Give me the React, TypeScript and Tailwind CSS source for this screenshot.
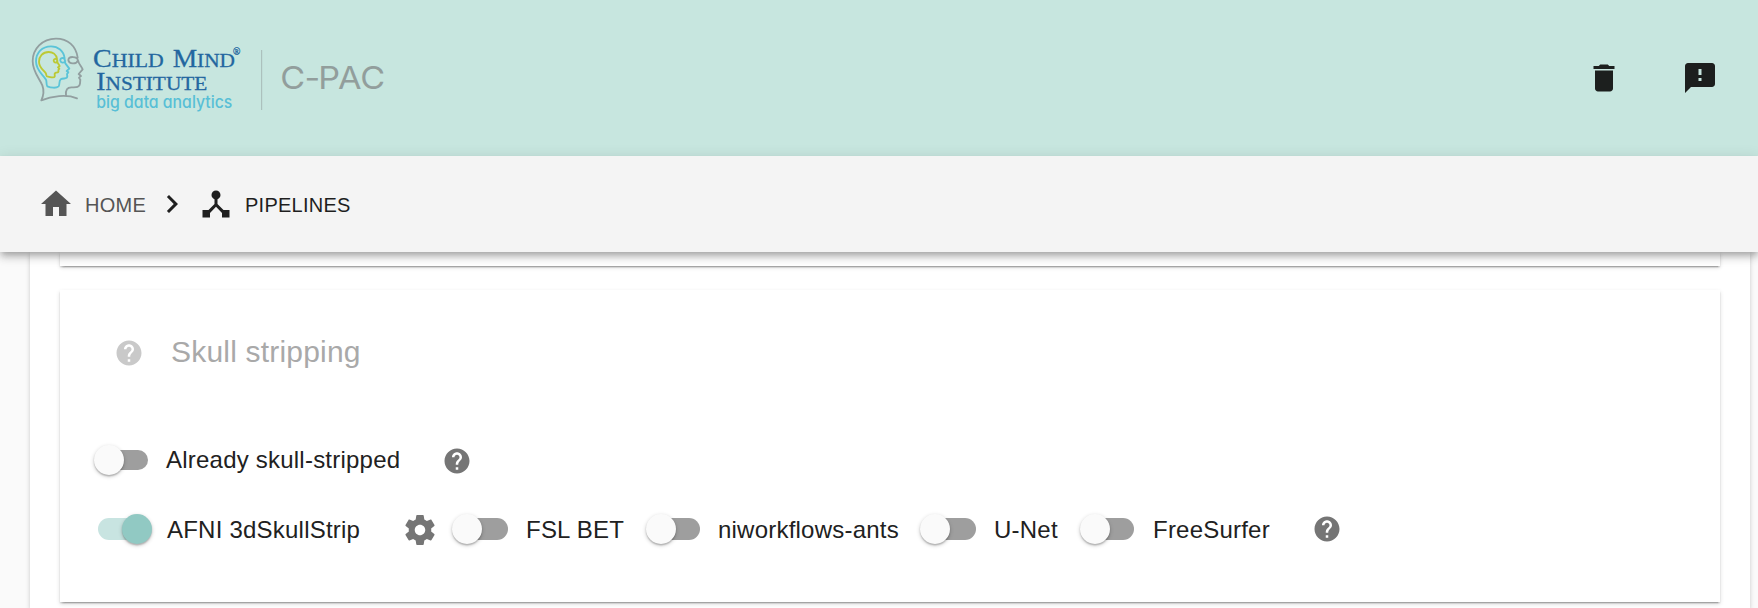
import React from "react";

const paths = {
  home: "M10 20v-6h4v6h5v-8h3L12 3 2 12h3v8z",
  chevron: "M10 6L8.59 7.41 13.17 12l-4.58 4.59L10 18l6-6z",
  hub: "M17 16l-4-4V8.82C14.16 8.4 15 7.3 15 6c0-1.66-1.34-3-3-3S9 4.34 9 6c0 1.3.84 2.4 2 2.82V12l-4 4H3v5h5v-3.05l4-4.2 4 4.2V21h5v-5h-4z",
  trash: "M6 19c0 1.1.9 2 2 2h8c1.1 0 2-.9 2-2V7H6v12zM19 4h-3.5l-1-1h-5l-1 1H5v2h14V4z",
  feedback: "M20 2H4c-1.1 0-1.99.9-1.99 2L2 22l4-4h14c1.1 0 2-.9 2-2V4c0-1.100-.9-2-2-2zm-7 12h-2v-2h2v2zm0-4h-2V6h2v4z",
  help: "M12 2C6.48 2 2 6.480 2 12s4.480 10 10 10 10-4.480 10-10S17.520 2 12 2zm1 17h-2v-2h2v2zm2.070-7.750l-.9.920C13.450 12.900 13 13.500 13 15h-2v-.5c0-1.100.450-2.100 1.170-2.830l1.240-1.260c.370-.360.590-.860.590-1.410 0-1.100-.9-2-2-2s-2 .9-2 2H8c0-2.210 1.790-4 4-4s4 1.790 4 4c0 .880-.360 1.680-.930 2.250z",
  gear: "M19.43 12.98c.04-.32.07-.64.07-.98s-.03-.66-.07-.98l2.110-1.650c.190-.150.240-.420.120-.640l-2-3.460c-.120-.220-.390-.300-.610-.220l-2.490 1c-.520-.400-1.080-.730-1.690-.980l-.380-2.650C14.460 2.180 14.250 2 14 2h-4c-.250 0-.460.180-.490.420l-.380 2.650c-.610.250-1.170.590-1.690.980l-2.490-1c-.230-.090-.490 0-.610.220l-2 3.460c-.130.220-.070.490.120.640l2.110 1.650c-.040.320-.070.650-.070.980s.030.660.070.980l-2.110 1.650c-.190.150-.240.420-.120.640l2 3.460c.120.220.390.300.610.220l2.490-1c.520.400 1.080.730 1.690.980l.380 2.650c.030.240.240.420.490.420h4c.250 0 .460-.180.490-.420l.380-2.650c.610-.250 1.170-.590 1.690-.980l2.490 1c.230.090.490 0 .610-.220l2-3.460c.120-.220.070-.490-.120-.640l-2.110-1.650zM12 15.500c-1.930 0-3.500-1.570-3.500-3.500s1.570-3.500 3.500-3.500 3.500 1.570 3.500 3.500-1.570 3.500-3.500 3.500z",
};

function Icon({ name, className = "" }: { name: keyof typeof paths; className?: string }) {
  return (
    <svg viewBox="0 0 24 24" fill="currentColor" className={`shrink-0 ${className}`}>
      <path d={paths[name]} />
    </svg>
  );
}

function Logo() {
  return (
    <svg width="370" height="100" viewBox="0 0 1110 300" className="mt-[25px] ml-5 shrink-0 self-start">
      <g fill="none" strokeLinecap="round" strokeLinejoin="round" strokeWidth="5.500">
        <path
          stroke="#929fa0"
          d="M173 98C168 62 143 41 108 41C66 41 38 73 38 108C38 140 56 156 67 181C73 197 70 213 64 226C94 213 140 207 171 220M138 212C136 194 142 187 154 187C166 187 179 189 180 176L181 164L177 158L183 153L176 147L188 133C184 124 176 117 174 106C172 94 146 92 145 105C147 118 169 119 174 106"
        />
        <path
          stroke="#5bc4d8"
          d="M134 100C131 77 114 64 93 64C66 64 48 84 48 109C48 137 68 147 78 164C81 171 78 180 82 184C93 189 109 190 116 184C120 178 116 169 122 163C130 158 142 164 142 154L141 147L145 142L140 138L148 131L136 115C134 111 136 108 134 103C129 96 120 99 121 107C124 116 134 113 136 108"
        />
        <path
          stroke="#bcc934"
          d="M111 102C109 88 98 81 86 81C68 81 57 94 57 110C57 128 70 134 77 144C81 152 77 154 84 155C92 156 102 160 104 155C106 150 100 145 108 143C114 142 117 142 115 135L118 131L114 127L119 123L112 112C114 101 101 98 101 107C103 115 111 114 112 108"
        />
      </g>
      <g fill="#23669f" stroke="#23669f" strokeWidth="0.9" fontFamily="'Liberation Serif', serif">
        <text x="219" y="125" textLength="212" lengthAdjust="spacingAndGlyphs" fontSize="76">
          C<tspan fontSize="59">HILD</tspan>
        </text>
        <text x="458" y="125" textLength="187" lengthAdjust="spacingAndGlyphs" fontSize="76">
          M<tspan fontSize="59">IND</tspan>
        </text>
        <text x="229" y="194" textLength="333" lengthAdjust="spacingAndGlyphs" fontSize="76">
          I<tspan fontSize="59">NSTITUTE</tspan>
        </text>
        <text x="639" y="91" fontSize="29">®</text>
      </g>
      <text
        x="229"
        y="250"
        textLength="408"
        lengthAdjust="spacingAndGlyphs"
        fontSize="50"
        fill="#58bfd6"
        className="font-[Inter] font-medium [font-feature-settings:'cv11']"
      >
        big data analytics
      </text>
      <path d="M725 75V255" stroke="#a8bbb7" strokeWidth="3" />
      <text
        x="710 776 813.5 867 928"
        y="192"
        transform="scale(1.1 1)"
        fontSize="93"
        fill="#929e9c"
        className="font-[Inter] font-normal"
      >
        C-PAC
      </text>
    </svg>
  );
}

type ToggleProps = {
  on?: boolean;
  label: string;
  className?: string;
  track?: string;
  text?: string;
};

function Toggle({ on = false, label, className = "", track = "h-[22px] w-[51px]", text = "ml-[18px] pt-0.5" }: ToggleProps) {
  return (
    <label className={`flex h-[60px] items-center ${className}`}>
      <span
        className={`flex shrink-0 items-center rounded-full ${track} ${
          on ? "justify-end bg-[#c8e4e1]" : "justify-start bg-[#9e9e9e]"
        }`}
      >
        <span
          className={`size-[30px] shrink-0 rounded-full shadow-[0_1.500px_4px_rgba(0,0,0,0.2),0_1.500px_1.500px_rgba(0,0,0,0.200)] ${
            on ? "-mr-[3px] bg-[#91c9c3]" : "-ml-[3px] bg-[#fafafa]"
          }`}
        />
      </span>
      <span className={`whitespace-nowrap text-2xl tracking-[0.22px] text-[#212121] ${text}`}>{label}</span>
    </label>
  );
}

const cardShadow =
  "shadow-[0_1.500px_4.500px_rgba(0,0,0,0.14),0_1.500px_1.500px_rgba(0,0,0,0.14),0_3px_1.500px_-1.500px_rgba(0,0,0,0.16)]";

export default function App() {
  return (
    <div className="flex h-[608px] w-[1758px] flex-col overflow-hidden bg-[#fafafa] font-['Liberation_Sans',Arial,sans-serif]">
      <header className="flex h-[156px] shrink-0 items-center justify-between bg-[#c7e6df] pr-10">
        <Logo />
        <div className="flex gap-[60px] text-[#1c1f1e]">
          <Icon name="trash" className="size-9" />
          <Icon name="feedback" className="size-9" />
        </div>
      </header>
      <nav className="relative z-10 flex h-24 shrink-0 items-center bg-[#f4f4f4] pl-[38px] text-xl tracking-[0.25px] text-[#1f1f1f] shadow-[0_3px_6px_-1.500px_rgba(0,0,0,0.2),0_6px_7.500px_rgba(0,0,0,0.14),0_1.500px_15px_rgba(0,0,0,0.12)]">
        <Icon name="home" className="size-9 text-[#555]" />
        <span className="ml-[11px] w-[69px] pt-0.5 text-[#555]">HOME</span>
        <Icon name="chevron" className="size-9" />
        <Icon name="hub" className="ml-2 size-9" />
        <span className="ml-[11px] pt-0.5">PIPELINES</span>
      </nav>
      <main className="ml-[30px] h-[356px] w-[1720px] shrink-0 bg-white px-[30px] shadow-[0_1.500px_4.500px_rgba(0,0,0,0.2)]">
        <div className={`h-[14px] bg-white ${cardShadow}`} />
        <section className={`mt-6 h-[312px] bg-white ${cardShadow}`}>
          <div className="flex h-[126px] items-center pl-[54px]">
            <Icon name="help" className="size-[30px] text-[#c9c9c9]" />
            <h2 className="ml-[27px] pb-1 text-[30px] tracking-[0.2px] text-[#a9a9a9]">Skull stripping</h2>
          </div>
          <div className="mt-[14px] flex h-[60px] items-center pl-[37px]">
            <Toggle
              label="Already skull-stripped"
              className="w-[345px]"
              track="h-5 w-[51px]"
              text="ml-[18px]"
            />
            <Icon name="help" className="mt-px size-[30px] text-[#757575]" />
          </div>
          <div className="mt-[9px] flex h-[60px] items-center pl-[38px]">
            <Toggle on label="AFNI 3dSkullStrip" className="w-[304px]" />
            <Icon name="gear" className="mt-px size-9 text-[#757575]" />
            <Toggle label="FSL BET" className="ml-[17px] w-[194px]" track="h-[22px] w-[53px]" />
            <Toggle label="niworkflows-ants" className="w-[274px]" />
            <Toggle label="U-Net" className="w-[160px]" track="h-[22px] w-[53px]" />
            <Toggle label="FreeSurfer" className="w-[229px]" text="ml-[19px] pt-0.5" />
            <Icon name="help" className="size-[30px] text-[#757575]" />
          </div>
        </section>
      </main>
    </div>
  );
}
